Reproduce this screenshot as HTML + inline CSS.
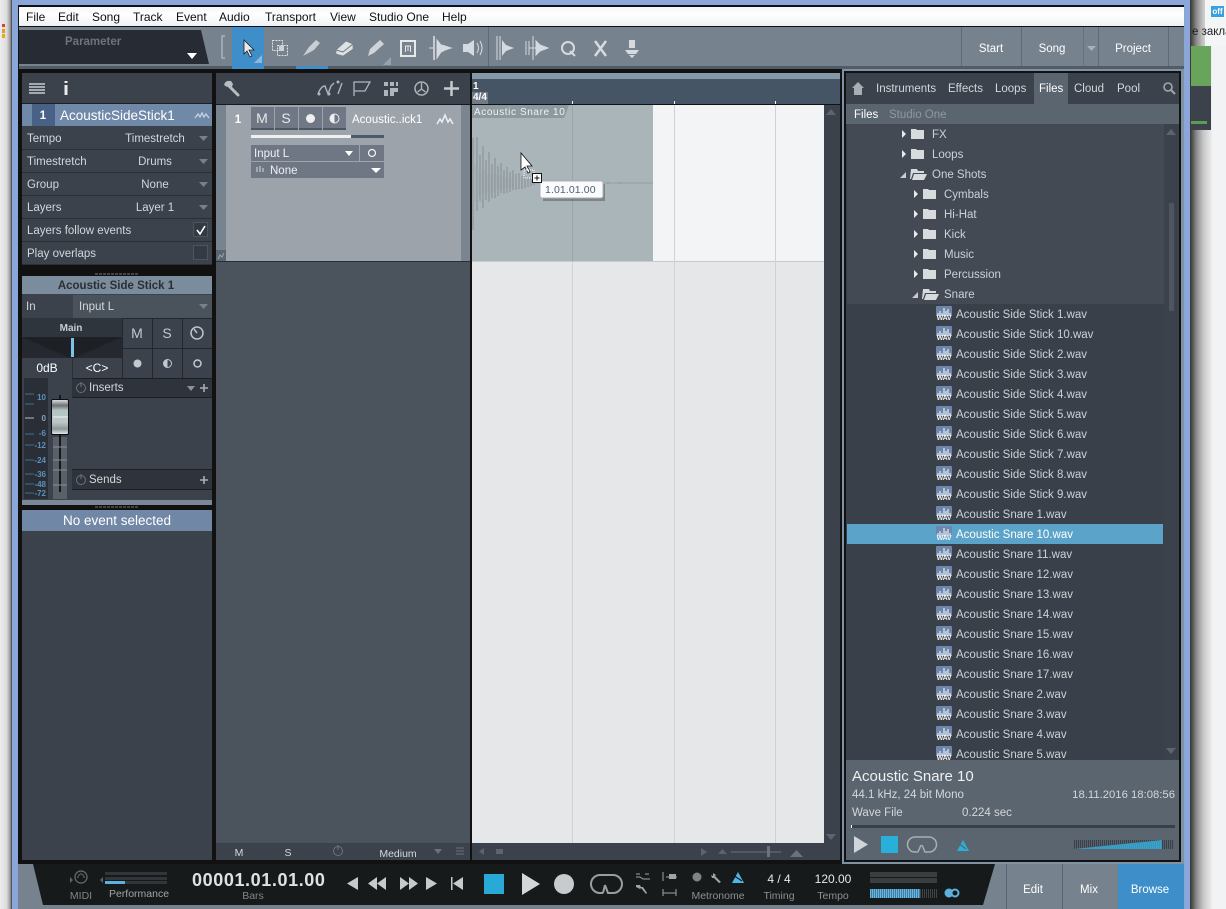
<!DOCTYPE html>
<html><head><meta charset="utf-8"><title>Studio One</title>
<style>
html,body{margin:0;padding:0;width:1226px;height:909px;overflow:hidden;background:#f2f3f5}
body{position:relative;font:11.5px "Liberation Sans","Noto Sans CJK SC",sans-serif;color:#d3d7db}
.r{position:absolute}
.t{position:absolute;white-space:nowrap;line-height:14px;margin-top:1px}
.c{transform:translateX(-50%)}
.m{color:#111;font-size:12px;top:9px}
#list{position:absolute;left:847px;top:124px;width:317px;height:636px;overflow:hidden;background:#3a4049}
.row{position:relative;height:20px;line-height:20px;color:#cdd2d7;white-space:nowrap}
.d{background:#434a54}
.sel{background:#5ba3c9;color:#fff;width:316px;height:20px}
.row span{position:absolute;top:0}
.w{position:absolute;left:89px;top:2px;width:16px;height:16px;font-style:normal}
.w svg{position:absolute;left:0;top:0}
.w b{position:absolute;left:0;top:10px;width:16px;height:6px;color:#f4f6f8;font:bold 7px/6px "Liberation Sans",sans-serif;letter-spacing:-.2px;text-align:center}
.n{left:109px}
.p{color:#ccd1d6}
</style></head><body>
<!-- desktop -->
<div class="r" style="left:0;top:0;width:12px;height:909px;background:linear-gradient(90deg,#eceded,#dcdddd 55%,#9a9a9a 85%,#3f3f3f)"></div>
<div class="r" style="left:2px;top:24px;width:3px;height:3px;background:#e23b3b"></div>
<div class="r" style="left:2px;top:29px;width:3px;height:4px;background:#e39b2a"></div>
<div class="r" style="left:2px;top:34px;width:3px;height:4px;background:#eaa81c"></div>
<div class="r" style="left:1190px;top:0;width:22px;height:909px;background:linear-gradient(90deg,#333,#8d8d8d 30%,#c6c6c6 60%,#eee)"></div>
<div class="r" style="left:1205px;top:0;width:21px;height:46px;background:#f4f5f6"></div>
<div class="r" style="left:1211px;top:6px;width:13px;height:11px;background:#3aa0e0;color:#fff;font:bold 8px/11px 'Liberation Sans',sans-serif;text-align:center">off</div>
<div class="t" style="left:1192px;top:24px;color:#222;font-size:11.5px;font-family:'Liberation Sans','Noto Sans CJK SC',sans-serif">е закла</div>
<div class="r" style="left:1191px;top:46px;width:20px;height:40px;background:#68a45a"></div>
<div class="r" style="left:1191px;top:86px;width:20px;height:44px;background:#3b424c"></div>
<div class="r" style="left:1191px;top:121px;width:16px;height:3px;background:#5f9b52"></div>
<!-- window -->
<div class="r" style="left:12px;top:0;width:1178px;height:909px;background:#8ba6d8"></div>
<div class="r" style="left:18px;top:5px;width:1166px;height:904px;background:#111"></div>
<div class="r" style="left:19px;top:7px;width:1165px;height:19px;background:linear-gradient(#f4f6f9,#fff 40%,#eef0f4)"></div>
<div class="t m" style="left:26px">File</div><div class="t m" style="left:58px">Edit</div><div class="t m" style="left:92px">Song</div><div class="t m" style="left:133px">Track</div><div class="t m" style="left:176px">Event</div><div class="t m" style="left:219px">Audio</div><div class="t m" style="left:265px">Transport</div><div class="t m" style="left:330px">View</div><div class="t m" style="left:369px">Studio One</div><div class="t m" style="left:442px">Help</div>
<!-- toolbar -->
<div class="r" style="left:19px;top:27px;width:1165px;height:39px;background:#76828e"></div>
<div class="r" style="left:19px;top:66px;width:1165px;height:3px;background:#525c66"></div>
<div class="r" style="left:19px;top:30px;width:190px;height:34px;background:#272b33;clip-path:polygon(0 0,182px 0,190px 34px,0 34px)"></div>
<div class="t" style="left:65px;top:34px;font-weight:bold;color:#6d737b">Parameter</div>
<div class="r" style="left:232px;top:27px;width:32px;height:42px;background:#3d8ec9"></div>
<div class="r" style="left:296px;top:66px;width:32px;height:3px;background:#3d8ec9"></div>
<div class="r" style="left:488px;top:27px;width:1px;height:39px;background:#5f6a75"></div>
<div class="r" style="left:961px;top:27px;width:1px;height:39px;background:#5f6a75"></div>
<div class="r" style="left:1021px;top:27px;width:1px;height:39px;background:#5f6a75"></div>
<div class="r" style="left:1083px;top:27px;width:1px;height:39px;background:#66717c"></div>
<div class="r" style="left:1098px;top:27px;width:1px;height:39px;background:#5f6a75"></div>
<div class="r" style="left:1168px;top:27px;width:1px;height:39px;background:#5f6a75"></div>
<div class="t c" style="left:991px;top:41px;color:#fff">Start</div>
<div class="t c" style="left:1052px;top:41px;color:#fff">Song</div>
<div class="t c" style="left:1133px;top:41px;color:#fff">Project</div>
<!-- left panel -->
<div class="r" style="left:22px;top:73px;width:190px;height:787px;background:#3b424c"></div>
<div class="r" style="left:22px;top:103px;width:190px;height:1px;background:#1c1f24"></div>
<div class="r" style="left:22px;top:104px;width:190px;height:22px;background:#7089a9"></div>
<div class="r" style="left:32px;top:104px;width:23px;height:22px;background:#4a6187"></div>
<div class="t c" style="left:43px;top:108px;font-weight:bold;color:#fff">1</div>
<div class="t" style="left:60px;top:108px;font-size:13.5px;color:#fff">AcousticSideStick1</div>
<div class="t" style="left:27px;top:131px">Tempo</div><div class="t c" style="left:155px;top:131px">Timestretch</div>
<div class="t" style="left:27px;top:154px">Timestretch</div><div class="t c" style="left:155px;top:154px">Drums</div>
<div class="t" style="left:27px;top:177px">Group</div><div class="t c" style="left:155px;top:177px">None</div>
<div class="t" style="left:27px;top:200px">Layers</div><div class="t c" style="left:155px;top:200px">Layer 1</div>
<div class="t" style="left:27px;top:223px">Layers follow events</div>
<div class="t" style="left:27px;top:246px">Play overlaps</div>
<div class="r" style="left:22px;top:149px;width:190px;height:1px;background:#2a2f36"></div>
<div class="r" style="left:22px;top:172px;width:190px;height:1px;background:#2a2f36"></div>
<div class="r" style="left:22px;top:195px;width:190px;height:1px;background:#2a2f36"></div>
<div class="r" style="left:22px;top:218px;width:190px;height:1px;background:#2a2f36"></div>
<div class="r" style="left:22px;top:241px;width:190px;height:1px;background:#2a2f36"></div>
<div class="r" style="left:22px;top:264px;width:190px;height:1px;background:#2a2f36"></div>
<div class="r" style="left:193px;top:222px;width:15px;height:15px;box-sizing:border-box;border:1px solid #4d545e;background:#343a43"></div>
<div class="r" style="left:193px;top:245px;width:15px;height:15px;box-sizing:border-box;border:1px solid #4d545e;background:#343a43"></div>
<div class="r" style="left:22px;top:265px;width:190px;height:11px;background:#111"></div>
<div class="r" style="left:95px;top:273px;width:44px;height:2px;background:repeating-linear-gradient(90deg,#444 0 3px,#111 3px 4px)"></div>
<!-- channel -->
<div class="r" style="left:22px;top:276px;width:190px;height:18px;background:#7b8c9c"></div>
<div class="t c" style="left:116px;top:278px;font-weight:bold;color:#2b2f34">Acoustic Side Stick 1</div>
<div class="r" style="left:22px;top:294px;width:190px;height:24px;background:#3b424c"></div>
<div class="r" style="left:73px;top:295px;width:139px;height:23px;background:#4a525c"></div>
<div class="t" style="left:26px;top:299px">In</div><div class="t" style="left:79px;top:299px">Input L</div>
<div class="r" style="left:22px;top:318px;width:100px;height:19px;background:#2f353d"></div>
<div class="t c" style="left:71px;top:321px;font-weight:bold;font-size:10px;color:#c9cdd2">Main</div>
<div class="r" style="left:22px;top:337px;width:100px;height:21px;background:#1d2024"></div>
<div class="r" style="left:22px;top:337px;width:100px;height:21px;background:#25282e;clip-path:polygon(0 0,48% 100%,0 100%)"></div>
<div class="r" style="left:22px;top:337px;width:100px;height:21px;background:#25282e;clip-path:polygon(100% 0,52% 100%,100% 100%)"></div>
<div class="r" style="left:71px;top:338px;width:3px;height:19px;background:#7cc3ea"></div>
<div class="t c" style="left:47px;top:360px;color:#fff;font-size:12px">0dB</div>
<div class="r" style="left:72px;top:358px;width:1px;height:20px;background:#2a2f36"></div>
<div class="t c" style="left:97px;top:360px;color:#fff;font-size:12px">&lt;C&gt;</div>
<div class="r" style="left:122px;top:318px;width:90px;height:60px;background:#23272d"></div>
<div class="r" style="left:123px;top:319px;width:29px;height:29px;background:#3b424c"></div><div class="r" style="left:153px;top:319px;width:29px;height:29px;background:#3b424c"></div><div class="r" style="left:183px;top:319px;width:29px;height:29px;background:#3b424c"></div>
<div class="r" style="left:123px;top:349px;width:29px;height:29px;background:#3b424c"></div><div class="r" style="left:153px;top:349px;width:29px;height:29px;background:#3b424c"></div><div class="r" style="left:183px;top:349px;width:29px;height:29px;background:#3b424c"></div>
<div class="t c" style="left:137px;top:325px;font-size:14px;color:#c5c9ce">M</div><div class="t c" style="left:167px;top:325px;font-size:14px;color:#c5c9ce">S</div>
<div class="r" style="left:72px;top:378px;width:140px;height:20px;background:#2f343c;border-top:1px solid #1c1f24;border-bottom:1px solid #1c1f24;box-sizing:border-box"></div>
<div class="t" style="left:89px;top:380px">Inserts</div>
<div class="r" style="left:72px;top:469px;width:140px;height:21px;background:#2f343c;border-top:1px solid #1c1f24;border-bottom:1px solid #1c1f24;box-sizing:border-box"></div>
<div class="t" style="left:89px;top:472px">Sends</div>
<div class="r" style="left:24px;top:378px;width:24px;height:121px;background:#2a2f37"></div>
<div class="r" style="left:53px;top:437px;width:14px;height:62px;background:#5a6068"></div>
<div class="r" style="left:59px;top:395px;width:2px;height:97px;background:#15181b"></div>
<div class="r" style="left:51px;top:399px;width:18px;height:36px;box-sizing:border-box;border:1px solid #0d0e10;border-radius:2px;background:linear-gradient(#d8dcdc,#6c7275 16%,#b3c2c2 30%,#bcc9c9 65%,#8d9698 85%,#e4e6e6)"></div>
<div class="t" style="right:1180px;top:392px;font:bold 8px/10px 'Liberation Sans',sans-serif;color:#5d8fb8">10</div>
<div class="t" style="right:1180px;top:413px;font:bold 8px/10px 'Liberation Sans',sans-serif;color:#7fa5c4">0</div>
<div class="t" style="right:1180px;top:428px;font:bold 8px/10px 'Liberation Sans',sans-serif;color:#5d8fb8">-6</div>
<div class="t" style="right:1180px;top:440px;font:bold 8px/10px 'Liberation Sans',sans-serif;color:#5d8fb8">-12</div>
<div class="t" style="right:1180px;top:455px;font:bold 8px/10px 'Liberation Sans',sans-serif;color:#5d8fb8">-24</div>
<div class="t" style="right:1180px;top:469px;font:bold 8px/10px 'Liberation Sans',sans-serif;color:#5d8fb8">-36</div>
<div class="t" style="right:1180px;top:479px;font:bold 8px/10px 'Liberation Sans',sans-serif;color:#5d8fb8">-48</div>
<div class="t" style="right:1180px;top:488px;font:bold 8px/10px 'Liberation Sans',sans-serif;color:#5d8fb8">-72</div>
<div class="r" style="left:22px;top:500px;width:190px;height:5px;background:#7a8896"></div>
<div class="r" style="left:22px;top:505px;width:190px;height:5px;background:#111"></div>
<div class="r" style="left:95px;top:506px;width:44px;height:2px;background:repeating-linear-gradient(90deg,#444 0 3px,#111 3px 4px)"></div>
<div class="r" style="left:22px;top:510px;width:190px;height:21px;background:#7087a6"></div>
<div class="t c" style="left:117px;top:513px;font-size:13.5px;color:#fff">No event selected</div>
<!-- middle -->
<div class="r" style="left:216px;top:73px;width:254px;height:787px;background:#4b545d"></div>
<div class="r" style="left:216px;top:73px;width:254px;height:31px;background:#3b424c"></div>
<div class="r" style="left:216px;top:104px;width:254px;height:1px;background:#15181c"></div>
<div class="r" style="left:216px;top:105px;width:10px;height:156px;background:#77838e"></div>
<div class="r" style="left:226px;top:105px;width:235px;height:156px;background:#9ca3ab"></div>
<div class="r" style="left:461px;top:105px;width:9px;height:156px;background:#7a858f"></div>
<div class="r" style="left:216px;top:261px;width:254px;height:1px;background:#2a2f36"></div>
<div class="r" style="left:216px;top:250px;width:10px;height:11px;background:#5c6670"></div>
<div class="t c" style="left:238px;top:112px;font-weight:bold;color:#fff">1</div>
<div class="r" style="left:251px;top:107px;width:23px;height:23px;background:#6f7884;border-bottom:2px solid #4e5661;box-sizing:border-box"></div>
<div class="r" style="left:275px;top:107px;width:23px;height:23px;background:#6f7884;border-bottom:2px solid #4e5661;box-sizing:border-box"></div>
<div class="r" style="left:299px;top:107px;width:23px;height:23px;background:#6f7884;border-bottom:2px solid #4e5661;box-sizing:border-box"></div>
<div class="r" style="left:323px;top:107px;width:23px;height:23px;background:#6f7884;border-bottom:2px solid #4e5661;box-sizing:border-box"></div>
<div class="t c" style="left:262px;top:110px;font-size:14px;color:#e8eaec">M</div><div class="t c" style="left:286px;top:110px;font-size:14px;color:#e8eaec">S</div>
<div class="t" style="left:352px;top:112px;color:#fff;font-size:11.5px">Acoustic..ick1</div>
<div class="r" style="left:251px;top:135px;width:100px;height:3px;background:#edeff1"></div>
<div class="r" style="left:351px;top:135px;width:33px;height:3px;background:#4c5a6c"></div>
<div class="r" style="left:251px;top:145px;width:108px;height:16px;background:#6f7684"></div>
<div class="r" style="left:360px;top:145px;width:24px;height:16px;background:#6f7684"></div>
<div class="r" style="left:251px;top:162px;width:133px;height:16px;background:#6f7684"></div>
<div class="t" style="left:254px;top:146px;color:#f0f1f3">Input L</div>
<div class="t" style="left:270px;top:163px;color:#f0f1f3">None</div>
<div class="r" style="left:216px;top:843px;width:254px;height:17px;background:#3b424c"></div>
<div class="t c" style="left:239px;top:845px;font-size:10.5px">M</div><div class="t c" style="left:288px;top:845px;font-size:10.5px">S</div>
<div class="t c" style="left:398px;top:846px;font-size:10.5px">Medium</div>
<!-- arrange -->
<div class="r" style="left:470px;top:73px;width:370px;height:787px;background:#111"></div>
<div class="r" style="left:472px;top:73px;width:368px;height:6px;background:#8598a8"></div>
<div class="r" style="left:472px;top:79px;width:368px;height:25px;background:#455566"></div>
<div class="t" style="left:473px;top:79px;color:#fff;font-weight:bold;font-size:10px">1</div>
<div class="r" style="left:472px;top:92px;width:16px;height:12px;background:#6f7c88"></div>
<div class="t" style="left:473px;top:90px;color:#fff;font-weight:bold;font-size:10px">4/4</div>
<div class="r" style="left:572px;top:101px;width:1px;height:3px;background:#fff"></div><div class="r" style="left:674px;top:101px;width:1px;height:3px;background:#fff"></div><div class="r" style="left:775px;top:101px;width:1px;height:3px;background:#fff"></div>
<div class="r" style="left:472px;top:105px;width:352px;height:156px;background:#f3f4f6"></div>
<div class="r" style="left:472px;top:261px;width:352px;height:1px;background:#c9cbce"></div>
<div class="r" style="left:472px;top:262px;width:352px;height:581px;background:#e6e7e9"></div>
<div class="r" style="left:674px;top:105px;width:1px;height:738px;background:#cfd2d5"></div>
<div class="r" style="left:775px;top:105px;width:1px;height:738px;background:#cfd2d5"></div>
<div class="r" style="left:572px;top:262px;width:1px;height:581px;background:#cfd2d5"></div>
<div class="r" style="left:472px;top:105px;width:181px;height:156px;background:#a9b5b8"></div>
<div class="r" style="left:572px;top:105px;width:1px;height:156px;background:#99a5a8"></div>
<div class="r" style="left:472px;top:105px;width:97px;height:13px;background:#8c9aa0;clip-path:polygon(0 0,100% 0,95% 100%,0 100%)"></div>
<div class="t" style="left:474px;top:105px;color:#f0f2f3;font-size:10px;letter-spacing:.6px">Acoustic Snare 10</div>
<div class="r" style="left:824px;top:105px;width:16px;height:738px;background:#3b424c"></div>
<div class="r" style="left:472px;top:843px;width:368px;height:17px;background:#3b424c"></div>
<!-- browser -->
<div class="r" style="left:842px;top:69px;width:342px;height:795px;background:#7f92a5"></div>
<div class="r" style="left:844px;top:71px;width:337px;height:791px;background:#111"></div>
<div class="r" style="left:846px;top:73px;width:333px;height:787px;background:#3a4049"></div>
<div class="r" style="left:846px;top:73px;width:333px;height:30px;background:#3b424c"></div>
<div class="r" style="left:1034px;top:73px;width:34px;height:31px;background:#5b6570"></div>
<div class="r" style="left:846px;top:104px;width:333px;height:20px;background:#5b6570"></div>
<div class="t" style="left:876px;top:81px">Instruments</div><div class="t" style="left:948px;top:81px">Effects</div><div class="t" style="left:995px;top:81px">Loops</div><div class="t" style="left:1039px;top:81px;color:#fff">Files</div><div class="t" style="left:1074px;top:81px">Cloud</div><div class="t" style="left:1117px;top:81px">Pool</div>
<div class="t" style="left:854px;top:107px;color:#fff">Files</div><div class="t" style="left:889px;top:107px;color:#8f98a2">Studio One</div>
<div class="r" style="left:1164px;top:124px;width:15px;height:636px;background:#3b424c"></div>
<div class="r" style="left:1169px;top:203px;width:5px;height:108px;background:#4d555f"></div>
<div id="list">
<div class="row d"><span class="p" style="left:85px;top:1px">FX</span></div>
<div class="row d"><span class="p" style="left:85px;top:1px">Loops</span></div>
<div class="row d"><span class="p" style="left:85px;top:1px">One Shots</span></div>
<div class="row d"><span class="p" style="left:97px;top:1px">Cymbals</span></div>
<div class="row d"><span class="p" style="left:97px;top:1px">Hi-Hat</span></div>
<div class="row d"><span class="p" style="left:97px;top:1px">Kick</span></div>
<div class="row d"><span class="p" style="left:97px;top:1px">Music</span></div>
<div class="row d"><span class="p" style="left:97px;top:1px">Percussion</span></div>
<div class="row d"><span class="p" style="left:97px;top:1px">Snare</span></div>
<div class="row"><i class="w"><svg width="16" height="10"><use href="#wf"/></svg><b>WAV</b></i><span class="n" style="top:1px">Acoustic Side Stick 1.wav</span></div>
<div class="row"><i class="w"><svg width="16" height="10"><use href="#wf"/></svg><b>WAV</b></i><span class="n" style="top:1px">Acoustic Side Stick 10.wav</span></div>
<div class="row"><i class="w"><svg width="16" height="10"><use href="#wf"/></svg><b>WAV</b></i><span class="n" style="top:1px">Acoustic Side Stick 2.wav</span></div>
<div class="row"><i class="w"><svg width="16" height="10"><use href="#wf"/></svg><b>WAV</b></i><span class="n" style="top:1px">Acoustic Side Stick 3.wav</span></div>
<div class="row"><i class="w"><svg width="16" height="10"><use href="#wf"/></svg><b>WAV</b></i><span class="n" style="top:1px">Acoustic Side Stick 4.wav</span></div>
<div class="row"><i class="w"><svg width="16" height="10"><use href="#wf"/></svg><b>WAV</b></i><span class="n" style="top:1px">Acoustic Side Stick 5.wav</span></div>
<div class="row"><i class="w"><svg width="16" height="10"><use href="#wf"/></svg><b>WAV</b></i><span class="n" style="top:1px">Acoustic Side Stick 6.wav</span></div>
<div class="row"><i class="w"><svg width="16" height="10"><use href="#wf"/></svg><b>WAV</b></i><span class="n" style="top:1px">Acoustic Side Stick 7.wav</span></div>
<div class="row"><i class="w"><svg width="16" height="10"><use href="#wf"/></svg><b>WAV</b></i><span class="n" style="top:1px">Acoustic Side Stick 8.wav</span></div>
<div class="row"><i class="w"><svg width="16" height="10"><use href="#wf"/></svg><b>WAV</b></i><span class="n" style="top:1px">Acoustic Side Stick 9.wav</span></div>
<div class="row"><i class="w"><svg width="16" height="10"><use href="#wf"/></svg><b>WAV</b></i><span class="n" style="top:1px">Acoustic Snare 1.wav</span></div>
<div class="row sel"><i class="w"><svg width="16" height="10"><use href="#wf"/></svg><b>WAV</b></i><span class="n" style="top:1px">Acoustic Snare 10.wav</span></div>
<div class="row"><i class="w"><svg width="16" height="10"><use href="#wf"/></svg><b>WAV</b></i><span class="n" style="top:1px">Acoustic Snare 11.wav</span></div>
<div class="row"><i class="w"><svg width="16" height="10"><use href="#wf"/></svg><b>WAV</b></i><span class="n" style="top:1px">Acoustic Snare 12.wav</span></div>
<div class="row"><i class="w"><svg width="16" height="10"><use href="#wf"/></svg><b>WAV</b></i><span class="n" style="top:1px">Acoustic Snare 13.wav</span></div>
<div class="row"><i class="w"><svg width="16" height="10"><use href="#wf"/></svg><b>WAV</b></i><span class="n" style="top:1px">Acoustic Snare 14.wav</span></div>
<div class="row"><i class="w"><svg width="16" height="10"><use href="#wf"/></svg><b>WAV</b></i><span class="n" style="top:1px">Acoustic Snare 15.wav</span></div>
<div class="row"><i class="w"><svg width="16" height="10"><use href="#wf"/></svg><b>WAV</b></i><span class="n" style="top:1px">Acoustic Snare 16.wav</span></div>
<div class="row"><i class="w"><svg width="16" height="10"><use href="#wf"/></svg><b>WAV</b></i><span class="n" style="top:1px">Acoustic Snare 17.wav</span></div>
<div class="row"><i class="w"><svg width="16" height="10"><use href="#wf"/></svg><b>WAV</b></i><span class="n" style="top:1px">Acoustic Snare 2.wav</span></div>
<div class="row"><i class="w"><svg width="16" height="10"><use href="#wf"/></svg><b>WAV</b></i><span class="n" style="top:1px">Acoustic Snare 3.wav</span></div>
<div class="row"><i class="w"><svg width="16" height="10"><use href="#wf"/></svg><b>WAV</b></i><span class="n" style="top:1px">Acoustic Snare 4.wav</span></div>
<div class="row"><i class="w"><svg width="16" height="10"><use href="#wf"/></svg><b>WAV</b></i><span class="n" style="top:1px">Acoustic Snare 5.wav</span></div>
</div>
<div class="r" style="left:846px;top:760px;width:333px;height:100px;background:#5b6570"></div>
<div class="t" style="left:852px;top:769px;font-size:15px;color:#eef0f2">Acoustic Snare 10</div>
<div class="t" style="left:852px;top:787px">44.1 kHz, 24 bit Mono</div>
<div class="t" style="right:51px;top:787px;font-size:11.3px">18.11.2016 18:08:56</div>
<div class="t" style="left:852px;top:805px">Wave File</div><div class="t" style="left:962px;top:805px">0.224 sec</div>
<div class="r" style="left:851px;top:825px;width:324px;height:3px;background:#3a4049"></div>
<div class="r" style="left:851px;top:825px;width:1px;height:3px;background:#fff"></div>
<div class="r" style="left:881px;top:836px;width:17px;height:17px;background:#29b0da"></div>
<div class="r" style="left:1074px;top:840px;width:100px;height:9px;background:repeating-linear-gradient(90deg,#3a4049 0 1px,#59626c 1px 2px)"></div>
<div class="r" style="left:1074px;top:840px;width:88px;height:9px;background:repeating-linear-gradient(90deg,#29a9d6 0 1px,#4a8fb0 1px 2px);clip-path:polygon(0 100%,100% 0,100% 100%)"></div>
<!-- transport -->
<div class="r" style="left:18px;top:864px;width:1166px;height:45px;background:#76828e"></div>
<div class="r" style="left:33px;top:864px;width:972px;height:41px;background:#171a1b;clip-path:polygon(0 0,962px 0,950px 41px,10px 41px)"></div>
<div class="r" style="left:1006px;top:864px;width:1px;height:45px;background:#5b6670"></div>
<div class="r" style="left:1062px;top:864px;width:1px;height:45px;background:#5b6670"></div>
<div class="r" style="left:1118px;top:864px;width:66px;height:45px;background:#3d8ec9"></div>
<div class="t c" style="left:1033px;top:882px;color:#fff">Edit</div><div class="t c" style="left:1089px;top:882px;color:#fff">Mix</div><div class="t c" style="left:1150px;top:882px;color:#fff">Browse</div>
<div class="t c" style="left:81px;top:888px;color:#7f858a;font-size:10.5px">MIDI</div>
<div class="t c" style="left:139px;top:886px;color:#a0a5a9;font-size:10.5px">Performance</div>
<div class="r" style="left:105px;top:872px;width:62px;height:3px;background:#31363a"></div>
<div class="r" style="left:105px;top:877px;width:62px;height:3px;background:#31363a"></div>
<div class="r" style="left:105px;top:880px;width:62px;height:1px;background:#171a1b"></div>
<div class="r" style="left:105px;top:881px;width:62px;height:3px;background:#31363a"></div>
<div class="r" style="left:105px;top:881px;width:20px;height:3px;background:#5cb2dc"></div>
<div class="t" style="left:192px;top:870px;font-size:18px;line-height:18px;font-weight:bold;color:#dfe1e2;letter-spacing:.6px">00001.01.01.00</div>
<div class="t c" style="left:253px;top:888px;color:#7f858a;font-size:10.5px">Bars</div>
<div class="r" style="left:484px;top:874px;width:20px;height:20px;background:#29a9d6"></div>
<div class="t c" style="left:718px;top:888px;color:#8a9094;font-size:10.5px">Metronome</div>
<div class="t c" style="left:779px;top:871px;color:#e6e8e9;font-size:12px">4 / 4</div>
<div class="t c" style="left:779px;top:888px;color:#8a9094;font-size:10.5px">Timing</div>
<div class="t c" style="left:833px;top:871px;color:#e6e8e9;font-size:12px">120.00</div>
<div class="t c" style="left:833px;top:888px;color:#8a9094;font-size:10.5px">Tempo</div>
<div class="r" style="left:870px;top:872px;width:67px;height:5px;background:#3a3e41"></div>
<div class="r" style="left:870px;top:878px;width:67px;height:5px;background:#3a3e41"></div>
<div class="r" style="left:870px;top:889px;width:67px;height:9px;background:repeating-linear-gradient(90deg,#3f4447 0 1px,#171a1b 1px 2px)"></div>
<div class="r" style="left:870px;top:889px;width:50px;height:9px;background:repeating-linear-gradient(90deg,#6fb4dc 0 1px,#3a7ea6 1px 2px)"></div>
<!-- icons -->
<svg class="r" style="left:0;top:0" width="1226" height="909" viewBox="0 0 1226 909">
<defs><g id="wf"><rect width="16" height="10" rx="1" fill="#6c87ab"/><path d="M2 10V7M4 10V5M6 10V7M8 10V2M10 10V5M12 10V3M14 10V7" stroke="#e6ebf1" stroke-width="1.200"/></g></defs>
<path d="M187 53l10 0-5 6z" fill="#fff"/>
<!-- toolbar -->
<path d="M225 36h-3v22h3" fill="none" stroke="#b8bfc5" stroke-width="1.200"/>
<path d="M244 40v14l3-3 3 6 2-1-3-6h5z" fill="#e8eaec" stroke="#222" stroke-width=".8"/>
<path d="M254 63l8-8v8z" fill="#8fb8d8"/>
<rect x="272.500" y="40.500" width="10" height="10" fill="none" stroke="#e0e3e6" stroke-dasharray="2 1"/><rect x="277.500" y="45.500" width="10" height="10" fill="none" stroke="#e0e3e6" stroke-dasharray="2 1"/><rect x="279" y="46" width="5" height="5" fill="#cfd3d7"/>
<path d="M303 56l6-9 7-7 4 3-6 7z" fill="#c9ced2"/>
<path d="M336 50l10-9 7 3v5l-10 7-7-2z" fill="#dfe2e4" stroke="#7a858f" stroke-width=".7"/><path d="M336 50l7 2 10-8" fill="none" stroke="#6c7680"/>
<path d="M368 56l2-7 10-9 4 4-10 9z" fill="#d0d4d8"/>
<path d="M383 65l8-8v8z" fill="#98a2ab"/>
<rect x="401" y="41" width="14" height="15" fill="none" stroke="#e6e8ea" stroke-width="2"/><path d="M405.500 52v-6h5v6M408 46v5" fill="none" stroke="#e6e8ea"/>
<path d="M434 36v24" stroke="#e0e3e6" stroke-width="1.500"/><path d="M429 48h5M437 40l4 5 4 1 6 2-6 2-4 2-4 6z" fill="#d6dade" stroke="#d6dade"/>
<path d="M463 44h5l6-4v16l-6-4h-5z" fill="#d6dade"/><path d="M477 43q3 5 0 10M480 41q4 7 0 14" fill="none" stroke="#d6dade"/>
<path d="M497 36v24M500 36v24" stroke="#d6dade"/><path d="M502 40l4 5 8 3-8 3-4 5z" fill="#d6dade"/>
<path d="M526 41v14M529 41v14M533 36v24" stroke="#d6dade"/><path d="M536 41l4 4 8 3-8 3-4 4zM529 48h7" fill="#d6dade" stroke="#d6dade"/>
<circle cx="568" cy="48" r="6" fill="none" stroke="#d6dade" stroke-width="2"/><path d="M570 51l5 5" stroke="#d6dade" stroke-width="2"/>
<path d="M595 41l11 15M606 41l-11 15" stroke="#d6dade" stroke-width="2.500"/>
<path d="M629 40h6v8h-6zM625 50h14l-3 4h-8zM629 55h6l-3 3z" fill="#d6dade"/>
<path d="M1087 46h9l-4.500 5z" fill="#a8b0b8"/>
<!-- left panel -->
<path d="M29 84h16M29 87h16M29 90h16M29 93h16" stroke="#c8ccd0" stroke-width="1.500"/>
<path d="M66 81v2M66 85v10" stroke="#e8eaec" stroke-width="3"/>
<path d="M195 118l3-4 2 3 2-4 2 4 2-3 3 4" fill="none" stroke="#c8d3e0" stroke-width="1.300"/>
<g fill="#76808a"><path d="M199 136h9l-4.500 5zM199 159h9l-4.500 5zM199 182h9l-4.500 5zM199 205h9l-4.500 5zM199 304h9l-4.500 5z"/></g>
<path d="M197 230l3 4 5-8" fill="none" stroke="#fff" stroke-width="1.600"/>
<!-- channel buttons -->
<circle cx="197" cy="333" r="6" fill="none" stroke="#bfc4c9" stroke-width="1.500"/><path d="M197 333l-3-4" stroke="#bfc4c9" stroke-width="1.500"/>
<circle cx="137.500" cy="363.500" r="4" fill="#c5c9ce"/>
<circle cx="167.500" cy="363.500" r="4" fill="none" stroke="#c5c9ce"/><path d="M167.500 359.500a4 4 0 0 0 0 8z" fill="#c5c9ce"/>
<circle cx="197.500" cy="363.500" r="3.500" fill="none" stroke="#c5c9ce" stroke-width="1.500"/>
<circle cx="81" cy="388" r="4.500" fill="none" stroke="#6a727b"/><path d="M81 382v5" stroke="#6a727b"/>
<circle cx="81" cy="480" r="4.500" fill="none" stroke="#6a727b"/><path d="M81 474v5" stroke="#6a727b"/>
<path d="M187 386h8l-4 5z" fill="#8a929a"/>
<path d="M200 388h8M204 384v8M200 480h8M204 476v8" stroke="#a8aeb4" stroke-width="1.600"/>
<path d="M25 394h9M25 404h9M25 418h9M25 434h9M25 445h9M25 460h9M25 474h9M25 484h9M25 493h9" stroke="#3c6f94"/><path d="M25 418h9" stroke="#b8bcc0"/>
<path d="M53 447h14M53 460h14M53 470h14M53 485h14" stroke="#8a9098"/>
<path d="M53 417h15" stroke="#f0f3f3"/>
<!-- middle header -->
<path d="M229 86l9 9" stroke="#b8bdc2" stroke-width="3" stroke-linecap="round"/><path d="M231 81q-6-1-7 4l3 2 2-2 3 2 1-3z" fill="#b8bdc2"/>
<path d="M318 94q3-8 7-8l3 8 3-8 3-3M342 83l-4 11" fill="none" stroke="#b0b5ba" stroke-width="1.400"/><circle cx="319" cy="94" r="1.500" fill="#b0b5ba"/><circle cx="329" cy="94" r="1.500" fill="#b0b5ba"/><circle cx="338" cy="82" r="1.500" fill="#b0b5ba"/>
<path d="M354 96V82h16l-5 9h-11" fill="none" stroke="#b0b5ba" stroke-width="1.300"/>
<path d="M384 82h4v4h-4zM390 82h4v4h-4zM396 82h2v4h-2zM390 88h8v4h-4v4h-4zM384 90h4v6h-4z" fill="#b0b5ba"/>
<circle cx="421.500" cy="88.500" r="6.500" fill="none" stroke="#b0b5ba" stroke-width="1.500"/><path d="M421.500 83v6l-4 3M421.500 89l4 3" fill="none" stroke="#b0b5ba" stroke-width="1.400"/>
<path d="M444 88.500h15M451.500 81v15" stroke="#c6cacd" stroke-width="2.500"/>
<!-- track icons -->
<circle cx="310.500" cy="118.500" r="4.500" fill="#edeff1"/>
<circle cx="334.500" cy="118.500" r="4.500" fill="none" stroke="#edeff1"/><path d="M334.500 114a4.500 4.500 0 0 0 0 9z" fill="#edeff1"/>
<path d="M437 124l3-5 2 3 3-7 3 7 2-3 3 5" fill="none" stroke="#eef0f2" stroke-width="1.500"/>
<path d="M345 151h8l-4 5z" fill="#fff"/><path d="M371 168h10l-5 5z" fill="#fff"/>
<circle cx="372" cy="153" r="3.500" fill="none" stroke="#f0f1f3" stroke-width="1.300"/>
<path d="M257 167v5M260 166v6M263 168v4" stroke="#b4bac2" stroke-width="1.500"/>
<path d="M218 259l2-4 2 2 2-4" fill="none" stroke="#9aa3ab"/>
<!-- mid bottom -->
<circle cx="338" cy="851" r="4.500" fill="none" stroke="#6a727b"/><path d="M338 845v5" stroke="#6a727b"/>
<path d="M434 849h8l-4 5z" fill="#6a727b"/><path d="M456 848h8M456 851h8M456 854h8" stroke="#6a727b"/>
<path d="M484 848v7l-5-3.500zM496 849h7v5h-7z" fill="#5c646d"/>
<path d="M701 848v8l6-4z" fill="#5c646d"/><path d="M718 854h9l-4.500-5z" fill="#5c646d"/><path d="M731 852h50" stroke="#6a727b"/><rect x="767" y="846" width="3" height="11" fill="#6a727b"/><path d="M803 857h-13l6.500-7z" fill="#6a727b"/>
<path d="M826 115h10l-5-6zM826 834h10l-5 6z" fill="#5c646d"/>
<!-- waveform -->
<path d="M475 165v36M479 170v26M482 172v22M485 170v24M488 174v18M491 173v20M494 175v16M497 175v15M500 176v14M503 177v12M506 177v11M509 178v10M512 179v8" stroke="#9fabae" stroke-width="1" fill="none"/>
<path d="M473 138v92M477 137v74M480 155v46M483 146v62M486 160v40M489 152v50M492 164v34M495 158v40M498 166v30M501 163v30M504 170v24M507 167v26M510 172v20M513 170v20M516 174v16M519 173v16M522 176v13M525 176v12M528 178v9M531 178v8M534 180v5" stroke="#8f989c" stroke-width="1.300" fill="none"/>
<path d="M535 183h118" stroke="#94a0a4"/>
<path d="M600 182v2M608 182v2M620 182v2" stroke="#8f989c"/>
<!-- tooltip & cursor -->
<rect x="543" y="184" width="62" height="17" fill="#555" opacity=".5"/>
<rect x="540" y="181" width="63" height="17" rx="2" fill="#fafbfc" stroke="#a8aeb4"/>
<path d="M521 153v17l4-3 3 6 2-1-3-6h5z" fill="#fff" stroke="#111" stroke-width=".8"/>
<rect x="524" y="170" width="10" height="8" fill="none" stroke="#fff" stroke-dasharray="1 1"/>
<rect x="532.500" y="173.500" width="9" height="9" fill="#fff" stroke="#111"/><path d="M534.500 178h5M537 175.500v5" stroke="#111"/>
<!-- browser icons -->
<path d="M858 82l-6 6h2v7h8v-7h2z" fill="#a8aeb4"/>
<circle cx="1168" cy="87" r="4" fill="none" stroke="#a0a6ac" stroke-width="1.600"/><path d="M1171 90l4 4" stroke="#a0a6ac" stroke-width="2"/>
<path d="M1166 135h10l-5-6zM1166 748h10l-5 6z" fill="#5c646d"/>
<g fill="#e8eaec"><path d="M902 130v8l4-4zM902 150v8l4-4zM914 190v8l4-4zM914 210v8l4-4zM914 230v8l4-4zM914 250v8l4-4zM914 270v8l4-4z"/><path d="M900 178l6-6v6zM912 298l6-6v6z" fill="#c8ccd0"/></g>
<g fill="#d8dbde"><path d="M911 129h5l1 1h7v9h-13zM911 149h5l1 1h7v9h-13zM923 189h5l1 1h7v9h-13zM923 209h5l1 1h7v9h-13zM923 229h5l1 1h7v9h-13zM923 249h5l1 1h7v9h-13zM923 269h5l1 1h7v9h-13z"/><path d="M911 169h6l1 2h6v2h-11l-2 6h-1zM914 174h13l-3 6h-12zM923 289h6l1 2h6v2h-11l-2 6h-1zM926 294h13l-3 6h-12z"/></g>
<path d="M854 836v17l14-8.500z" fill="#d0d5d9"/>
<path d="M918 852h-3a7 7 0 0 1 0-15h14a7 7 0 0 1 0 15h-4l-3-7M918 852l3-7" fill="none" stroke="#a8aeb4" stroke-width="1.500"/>
<path d="M957 851l6-11 6 11z" fill="#29b0da"/><path d="M958 843l8 6" stroke="#5b6570" stroke-width="1.300"/>
<!-- transport icons -->
<path d="M70 884v6l3-3zM103 884v6l-3-3z" fill="#5f6468" transform="translate(0,-7)"/>
<circle cx="81" cy="877" r="6" fill="none" stroke="#6b7074" stroke-width="1.200"/><path d="M78 877h.01M84 877h.01M81 874h.01M79 875h.01M83 875h.01" stroke="#8a8f93" stroke-width="1.400" stroke-linecap="round"/>
<g fill="#c6cacc"><path d="M358 877v13l-11-6.500zM377 877v13l-9-6.500zM386 877v13l-9-6.500zM400 877v13l9-6.500zM409 877v13l9-6.500zM426 877v13l11-6.500zM463 877v13l-10-6.500z"/><rect x="451" y="877" width="1.500" height="13"/></g>
<path d="M522 873v22l18-11z" fill="#d4d7d9"/>
<circle cx="564" cy="884" r="10" fill="#c8cbcd"/>
<path d="M603 893h-3a9 9 0 0 1 0-18h13a9 9 0 0 1 0 18h-5l-3-8M603 893l2-8" fill="none" stroke="#999ea2" stroke-width="2"/>
<g stroke="#a0a4a7" fill="none"><path d="M636 877h4l3 2h7M636 874h4M645 874h4"/><path d="M663 872v9M666 877h11"/><rect x="669" y="874" width="7" height="5" fill="#a0a4a7" stroke="none"/><path d="M663 896v-7M676 896v-7M663 893h13"/></g>
<path d="M636 887l4 2 1-1 5 6 1-1-4-6-2 0-1-2-4 0z" fill="#a0a4a7"/>
<circle cx="697" cy="877" r="4.500" fill="#7e8386"/>
<path d="M713 873l3 2-1 1 6 6-2 1-5-5-2 0-1-3 2 1z" fill="#a0a4a7"/>
<path d="M732 883l6-11 6 11z" fill="#4cb8e8"/><path d="M733 875l9 6" stroke="#171a1b" stroke-width="1.300"/>
<circle cx="949" cy="893" r="4.500" fill="#5cb2dc"/><circle cx="955" cy="893" r="4.500" fill="#5cb2dc"/><circle cx="955" cy="893" r="2.500" fill="#171a1b"/>
</svg>
<div class="t" style="left:545px;top:182px;color:#4f6272;font-size:10.5px;letter-spacing:.1px">1.01.01.00</div>
</body></html>
